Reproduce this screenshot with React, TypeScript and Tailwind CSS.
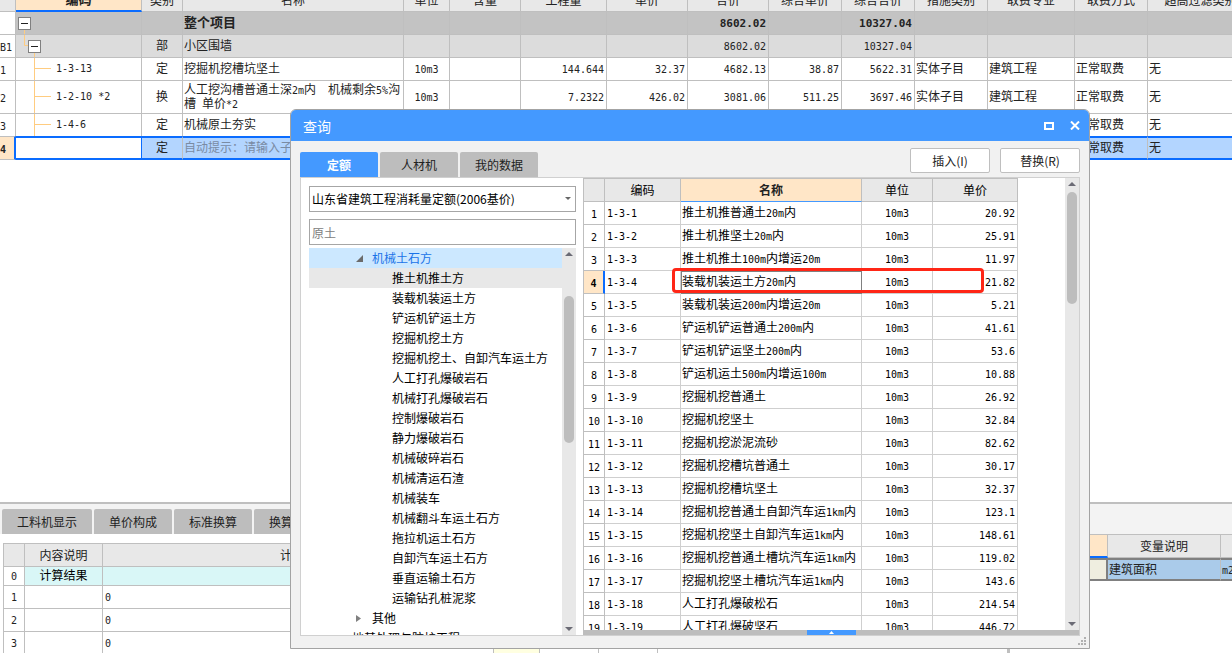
import { useState } from 'react';
import clsx from 'clsx';

const budgetColumns = [
  { title: '', width: 'w-4' },
  { title: '编码', width: 'w-[126px]' },
  { title: '类别', width: 'w-[41px]' },
  { title: '名称', width: 'w-[221px]' },
  { title: '单位', width: 'w-[46px]' },
  { title: '含量', width: 'w-[71px]' },
  { title: '工程量', width: 'w-[86px]' },
  { title: '单价', width: 'w-[81px]' },
  { title: '合价', width: 'w-[81px]' },
  { title: '综合单价', width: 'w-[73px]' },
  { title: '综合合价', width: 'w-[73px]' },
  { title: '措施类别', width: 'w-[73px]' },
  { title: '取费专业', width: 'w-[87px]' },
  { title: '取费方式', width: 'w-[73px]' },
  { title: '超高过滤类别', width: '' },
];

type BudgetRow = {
  no: string;
  code?: string;
  kind: string;
  name: string;
  unit?: string;
  qty?: string;
  price?: string;
  total?: string;
  unitCost?: string;
  totalCost?: string;
  measure?: string;
  major?: string;
  mode?: string;
  filter?: string;
  level: 'project' | 'section' | 'item' | 'new';
};

const budgetRows: BudgetRow[] = [
  { no: '', kind: '', name: '整个项目', total: '8602.02', totalCost: '10327.04', level: 'project' },
  { no: 'B1', kind: '部', name: '小区围墙', total: '8602.02', totalCost: '10327.04', level: 'section' },
  {
    no: '1', code: '1-3-13', kind: '定', name: '挖掘机挖槽坑坚土', unit: '10m3', qty: '144.644', price: '32.37',
    total: '4682.13', unitCost: '38.87', totalCost: '5622.31', measure: '实体子目', major: '建筑工程',
    mode: '正常取费', filter: '无', level: 'item',
  },
  {
    no: '2', code: '1-2-10 *2', kind: '换', name: '人工挖沟槽普通土深2m内\u3000机械剩余5%沟槽 单价*2', unit: '10m3',
    qty: '7.2322', price: '426.02', total: '3081.06', unitCost: '511.25', totalCost: '3697.46',
    measure: '实体子目', major: '建筑工程', mode: '正常取费', filter: '无', level: 'item',
  },
  { no: '3', code: '1-4-6', kind: '定', name: '机械原土夯实', mode: '正常取费', filter: '无', level: 'item' },
  { no: '4', kind: '定', name: '自动提示：请输入子目', mode: '正常取费', filter: '无', level: 'new' },
];

const quotas = [
  ['1-3-1', '推土机推普通土20m内', '20.92'],
  ['1-3-2', '推土机推坚土20m内', '25.91'],
  ['1-3-3', '推土机推土100m内增运20m', '11.97'],
  ['1-3-4', '装载机装运土方20m内', '21.82'],
  ['1-3-5', '装载机装运200m内增运20m', '5.21'],
  ['1-3-6', '铲运机铲运普通土200m内', '41.61'],
  ['1-3-7', '铲运机铲运坚土200m内', '53.6'],
  ['1-3-8', '铲运机运土500m内增运100m', '10.88'],
  ['1-3-9', '挖掘机挖普通土', '26.92'],
  ['1-3-10', '挖掘机挖坚土', '32.84'],
  ['1-3-11', '挖掘机挖淤泥流砂', '82.62'],
  ['1-3-12', '挖掘机挖槽坑普通土', '30.17'],
  ['1-3-13', '挖掘机挖槽坑坚土', '32.37'],
  ['1-3-14', '挖掘机挖普通土自卸汽车运1km内', '123.1'],
  ['1-3-15', '挖掘机挖坚土自卸汽车运1km内', '148.61'],
  ['1-3-16', '挖掘机挖普通土槽坑汽车运1km内', '119.02'],
  ['1-3-17', '挖掘机挖坚土槽坑汽车运1km内', '143.6'],
  ['1-3-18', '人工打孔爆破松石', '214.54'],
  ['1-3-19', '人工打孔爆破坚石', '446.72'],
];

const chapters = [
  '推土机推土方', '装载机装运土方', '铲运机铲运土方', '挖掘机挖土方', '挖掘机挖土、自卸汽车运土方',
  '人工打孔爆破岩石', '机械打孔爆破岩石', '控制爆破岩石', '静力爆破岩石', '机械破碎岩石', '机械清运石渣',
  '机械装车', '机械翻斗车运土石方', '拖拉机运土石方', '自卸汽车运土石方', '垂直运输土石方', '运输钻孔桩泥浆',
];

// Grid text: half-width characters take half the width of a Chinese character
function GridText({ text, large }: { text?: string; large?: boolean }) {
  if (!text) return null;
  return (
    <>
      {text.split(/([\x20-\x7e]+)/).map((part, i) =>
        i % 2 ? (
          <span
            key={i}
            className={clsx("leading-none font-['DejaVu_Sans_Mono',monospace]", large ? 'text-[11px]' : 'text-[10px]')}
          >
            {part}
          </span>
        ) : (
          part
        ),
      )}
    </>
  );
}

function Toggle() {
  return (
    <button aria-label="折叠" className="flex size-[13px] shrink-0 items-center justify-center border border-[#808080] bg-white">
      <span className="h-px w-[7px] bg-[#222]" />
    </button>
  );
}

function CodeCell({ row }: { row: BudgetRow }) {
  if (row.level === 'project') {
    return (
      <div className="flex h-[22px] items-center pl-0.5">
        <div className="relative">
          <Toggle />
          <span className="absolute top-[13px] left-1.5 h-1.5 w-px bg-[#ffcc80]" />
        </div>
      </div>
    );
  }
  if (row.level === 'section') {
    return (
      <div className="flex h-[22px] items-center pl-2">
        <svg width="4" height="22" className="shrink-0" stroke="#ffcc80">
          <path d="M.5 0V10.5H4" fill="none" />
        </svg>
        <div className="relative">
          <Toggle />
          <span className="absolute top-[13px] left-1.5 h-1.5 w-px bg-[#ffcc80]" />
        </div>
      </div>
    );
  }
  if (row.level === 'new') return null;
  return (
    <div className="flex items-center pl-[18px]">
      <svg width="22" height={row.no === '2' ? 32 : 22} className="shrink-0" stroke="#ffcc80">
        <path d={row.no === '2' ? 'M.5 0V32M0 15.5H17' : 'M.5 0V22M0 10.5H17'} fill="none" />
      </svg>
      <GridText text={row.code} />
    </div>
  );
}

function BudgetTable() {
  return (
    <table className="-mt-3 w-full min-w-[1254px] table-fixed border-separate border-spacing-0 text-[12px] leading-[14px] [&_td:nth-child(n+3)]:pb-0.5">
      <colgroup>
        {budgetColumns.map((c, i) => (
          <col key={i} className={c.width} />
        ))}
      </colgroup>
      <thead>
        <tr className="h-6">
          {budgetColumns.map((c, i) => (
            <th
              key={i}
              className={clsx(
                'border-r border-[#bfbfbf] p-0',
                i === 1 ? 'border-b-2 border-b-[#0a6cff] bg-[#ffe6c7] text-[13px] font-bold' : 'border-b bg-[#e8e8e8] font-normal',
              )}
            >
              {c.title}
            </th>
          ))}
        </tr>
      </thead>
      <tbody>
        {budgetRows.map((row, i) => {
          const active = row.level === 'new';
          const cell = clsx(
            'overflow-hidden border-r border-[#bfbfbf] p-0',
            active ? 'border-y-2 border-y-[#0a6cff]' : i !== 4 && 'border-b',
          );
          const num = clsx(cell, 'pr-0.5 text-right');
          return (
            <tr
              key={i}
              className={clsx(
                row.no === '2' ? 'h-[33px]' : active ? 'h-6' : i === 4 ? 'h-[22px]' : 'h-[23px]',
                row.level === 'project' && 'bg-[#c3c3c3] text-[13px] font-bold',
                row.level === 'section' && 'bg-[#dcdcdc]',
                active && 'bg-[#b3d5ff]',
              )}
            >
              <td
                className={clsx(
                  'overflow-hidden p-0 text-left',
                  active
                    ? 'border-t border-r-2 border-b border-[#bfbfbf] border-r-[#0a6cff] bg-[#ffe6c7] font-bold'
                    : 'border-r border-[#bfbfbf] bg-white',
                  !active && i !== 4 && 'border-b',
                )}
              >
                <GridText text={row.no} />
              </td>
              <td className={active ? 'border-y-2 border-r border-[#0a6cff] bg-white p-0' : cell}>
                <CodeCell row={row} />
              </td>
              <td className={clsx(cell, 'text-center')}>{row.kind}</td>
              <td className={clsx(cell, 'pl-px', active && 'whitespace-nowrap text-[#7a8ba3]')}>
                <GridText text={row.name} />
              </td>
              <td className={clsx(cell, 'text-center')}>
                <GridText text={row.unit} />
              </td>
              <td className={cell} />
              {[row.qty, row.price, row.total, row.unitCost, row.totalCost].map((v, j) => (
                <td key={j} className={num}>
                  <GridText text={v} large={row.level === 'project'} />
                </td>
              ))}
              {[row.measure, row.major, row.mode, row.filter].map((v, j) => (
                <td key={j} className={clsx(cell, 'pl-px')}>
                  {v}
                </td>
              ))}
            </tr>
          );
        })}
      </tbody>
    </table>
  );
}

function DetailPanel() {
  return (
    <section className="flex h-[151px] shrink-0 flex-col overflow-hidden border-t-2 border-[#bfbfbf]">
      <div className="flex shrink-0 gap-0.5 bg-[#f3f3f3] pt-[5px] pl-0.5 text-[12px]">
        {['工料机显示', '单价构成', '标准换算', '换算信息'].map((tab, i) => (
          <button key={tab} className={clsx('h-[25px] rounded-t-xs bg-[#bdbdbd]', i === 0 ? 'w-[90px]' : 'w-[78px]')}>
            {tab}
          </button>
        ))}
      </div>
      <div className="flex min-h-0 flex-1">
        <div className="w-[1010px] shrink-0 overflow-hidden border-r-2 border-[#bfbfbf] pt-[9px] pl-[3px]">
          <table className="w-full table-fixed border-separate border-spacing-0 border-t border-l border-[#bfbfbf] text-[12px] leading-[14px] [&_td]:pb-0.5">
            <colgroup>
              <col className="w-[21px]" />
              <col className="w-[78px]" />
              <col className="w-[391px]" />
              <col className="w-[46px]" />
              <col className="w-[59px]" />
              <col className="w-[59px]" />
              <col />
            </colgroup>
            <thead>
              <tr className="h-[23px] bg-[#e8e8e8]">
                {['', '内容说明', '计算式', '费率', '金额', '代号', '备注'].map((h) => (
                  <th key={h} className="border-r border-b border-[#bfbfbf] p-0 font-normal">
                    {h}
                  </th>
                ))}
              </tr>
            </thead>
            <tbody>
              {[0, 1, 2, 3, 4].map((n) => (
                <tr key={n} className={n === 0 ? 'h-[19px] bg-[#d9f7f7]' : 'h-[23px]'}>
                  <td className="border-r border-b border-[#bfbfbf] bg-white p-0 text-center">
                    <GridText text={String(n)} />
                  </td>
                  <td className="border-r border-b border-[#bfbfbf] p-0 text-center text-black">{n === 0 && '计算结果'}</td>
                  <td className="border-r border-b border-[#bfbfbf] p-0 pl-0.5">{n > 0 && <GridText text="0" />}</td>
                  <td className={clsx('border-r border-b border-[#bfbfbf] p-0', n > 0 && 'bg-[#ffffe1]')} />
                  <td className="border-r border-b border-[#bfbfbf] p-0" />
                  <td className="border-r border-b border-[#bfbfbf] p-0" />
                  <td className="border-r border-b border-[#bfbfbf] p-0" />
                </tr>
              ))}
            </tbody>
          </table>
        </div>
        <div className="min-w-0 flex-1 overflow-hidden">
          <table className="w-full min-w-[271px] table-fixed border-separate border-spacing-0 border-t border-[#bfbfbf] text-[12px] leading-[14px] [&_td]:pb-0.5">
            <colgroup>
              <col className="w-[98px]" />
              <col className="w-[113px]" />
              <col />
            </colgroup>
            <thead>
              <tr className="h-[23px] bg-[#e8e8e8]">
                <th className="border-r border-b-2 border-r-[#bfbfbf] border-b-[#0a6cff] bg-[#ffe6c7] p-0">变量名</th>
                <th className="border-r border-b border-[#bfbfbf] p-0 font-normal">变量说明</th>
                <th className="border-r border-b border-[#bfbfbf] p-0 font-normal">单位</th>
              </tr>
            </thead>
            <tbody>
              <tr className="h-[23px] bg-[#aacbea]">
                <td className="border-2 border-[#808080] bg-[#efeee0] p-0">JZMJ</td>
                <td className="border-y-2 border-r border-y-[#808080] border-r-[#bfbfbf] p-0 pl-px">建筑面积</td>
                <td className="border-y-2 border-[#808080] p-0 pl-px">
                  <GridText text="m2" />
                </td>
              </tr>
            </tbody>
          </table>
        </div>
      </div>
    </section>
  );
}

function ScrollBar({ thumb }: { thumb: string }) {
  return (
    <div className="flex w-3.5 shrink-0 flex-col items-center bg-[#e8e8e8] py-1">
      <svg width="8" height="4" className="shrink-0" fill="#6b6b75">
        <path d="M0 4 4 0l4 4z" />
      </svg>
      <div className="min-h-0 w-2.5 flex-1">
        <div className={clsx('rounded-full bg-[#bdbdbd]', thumb)} />
      </div>
      <svg width="8" height="4" className="shrink-0" fill="#6b6b75">
        <path d="M0 0h8L4 4z" />
      </svg>
    </div>
  );
}

function ChapterTree() {
  return (
    <div className="mt-[3px] flex min-h-0 flex-1 text-[12px] leading-5 text-black">
      <ul className="h-full min-w-0 flex-1 overflow-hidden">
        <li>
          <button className="flex h-5 w-full items-center bg-[#cce8ff] pl-[47px] text-[#1a73e8]">
            <svg width="7" height="7" className="mr-[9px]" fill="#6b6b6b">
              <path d="M7 0v7H0z" />
            </svg>
            机械土石方
          </button>
          <ul>
            {chapters.map((c, i) => (
              <li key={c}>
                <button className={clsx('block h-5 w-full pl-[83px] text-left whitespace-nowrap', i === 0 && 'bg-[#e8e8e8]')}>{c}</button>
              </li>
            ))}
          </ul>
        </li>
        <li>
          <button className="flex h-5 w-full items-center pl-[47px]">
            <svg width="5" height="7" className="mr-[11px]" fill="#808080">
              <path d="M0 0l5 3.5L0 7z" />
            </svg>
            其他
          </button>
        </li>
        <li>
          <button className="block h-5 w-full pl-[43px] text-left">地基处理与防护工程</button>
        </li>
      </ul>
      <ScrollBar thumb="mt-10 h-[147px]" />
    </div>
  );
}

function QuotaTable() {
  const [selected, setSelected] = useState(3);
  return (
    <table className="w-[435px] table-fixed border-separate border-spacing-0 border-t border-l border-[#bfbfbf] text-[12px] leading-[14px] text-black [&_td:nth-child(n+2)]:pb-0.5">
      <colgroup>
        <col className="w-[21px]" />
        <col className="w-[76px]" />
        <col className="w-[181px]" />
        <col className="w-[71px]" />
        <col className="w-[85px]" />
      </colgroup>
      <thead>
        <tr className="h-[23px] bg-[#e8e8e8]">
          {['', '编码', '名称', '单位', '单价'].map((h) => (
            <th
              key={h}
              className={clsx(
                'border-r border-b border-r-[#bfbfbf] p-0',
                h === '名称' ? 'border-b-[#4499ff] bg-[#ffe6c7] font-bold text-[#222]' : 'border-b-[#bfbfbf] font-normal',
              )}
            >
              {h}
            </th>
          ))}
        </tr>
      </thead>
      <tbody>
        {quotas.map(([code, name, price], i) => {
          const active = i === selected;
          return (
            <tr key={code} className="h-[23px]" onClick={() => setSelected(i)}>
              <td
                className={clsx(
                  'border-b border-[#bfbfbf] p-0 text-center',
                  active ? 'border-r-2 border-r-[#0a6cff] bg-[#ffe6c7] font-bold' : 'border-r',
                )}
              >
                <GridText text={String(i + 1)} />
              </td>
              <td className="border-r border-b border-[#cfcfcf] p-0 pl-0.5">
                <GridText text={code} />
              </td>
              <td
                className={clsx(
                  'overflow-hidden p-0 whitespace-nowrap',
                  active ? 'border border-b-2 border-[#808080]' : 'border-r border-b border-[#cfcfcf] pl-px',
                )}
              >
                <GridText text={name} />
              </td>
              <td className="border-r border-b border-[#cfcfcf] p-0 text-center">
                <GridText text="10m3" />
              </td>
              <td className="border-r border-b border-[#cfcfcf] p-0 pr-0.5 text-right">
                <GridText text={price} />
              </td>
            </tr>
          );
        })}
      </tbody>
    </table>
  );
}

function QueryDialog() {
  const [tab, setTab] = useState('定额');
  const [keyword, setKeyword] = useState('原土');

  return (
    <div
      role="dialog"
      aria-label="查询"
      className="absolute top-[109px] left-[290px] flex h-[540px] w-[800px] flex-col overflow-hidden rounded-t-md border border-[#a3a3a3] bg-[#f1f1f1]"
    >
      <div className="flex h-[31px] shrink-0 items-center bg-[#4499ff] pr-[9px] pl-3 text-white">
        <h2 className="flex-1 text-[14px] leading-5">查询</h2>
        <button aria-label="最大化" className="mr-4">
          <svg width="10" height="8" fill="none" stroke="currentColor" strokeWidth="2">
            <path d="M1 1h8v6H1z" />
          </svg>
        </button>
        <button aria-label="关闭">
          <svg width="10" height="9" fill="none" stroke="currentColor" strokeWidth="2">
            <path d="M1 .5l8 8M9 .5l-8 8" />
          </svg>
        </button>
      </div>

      <div className="flex h-9 shrink-0 items-end justify-between px-[9px] text-[12px]">
        <div className="flex gap-0.5">
          {['定额', '人材机', '我的数据'].map((t) => (
            <button
              key={t}
              onClick={() => setTab(t)}
              className={clsx('h-[25px] w-[78px] rounded-t-xs', t === tab ? 'bg-[#4499ff] font-bold text-white' : 'bg-[#bdbdbd]')}
            >
              {t}
            </button>
          ))}
        </div>
        <div className="mb-1 flex gap-2.5">
          <button className="h-[25px] w-20 rounded-xs border border-[#bfbfbf] bg-white">插入(I)</button>
          <button className="h-[25px] w-20 rounded-xs border border-[#bfbfbf] bg-white">替换(R)</button>
        </div>
      </div>

      <div className="mx-[9px] mb-3 flex min-h-0 flex-1 border border-[#d0d0d0] bg-white">
        <div className="flex w-[282px] shrink-0 flex-col pt-2 pr-[7px] pl-2 text-[12px]">
          <div className="relative">
            <select
              aria-label="定额库"
              className="block h-[26px] w-full appearance-none border border-[#a6a6a6] bg-white pl-0.5 text-black"
            >
              <option>山东省建筑工程消耗量定额(2006基价)</option>
            </select>
            <svg width="6" height="3" className="pointer-events-none absolute top-[11px] right-[5px]" fill="#666">
              <path d="M0 0h6L3 3z" />
            </svg>
          </div>
          <input
            type="text"
            aria-label="关键字"
            value={keyword}
            onChange={(e) => setKeyword(e.target.value)}
            className="mt-[7px] h-[26px] w-full border border-[#a6a6a6] bg-white pl-0.5 text-[#808080]"
          />
          <ChapterTree />
        </div>

        <div className="flex min-w-0 flex-1 flex-col">
          <div className="flex min-h-0 flex-1">
            <div className="relative min-w-0 flex-1 overflow-hidden">
              <QuotaTable />
              <div className="pointer-events-none absolute top-[90px] left-[89px] h-[25px] w-[312px] rounded-[4px] border-3 border-[#ff2616]" />
            </div>
            <ScrollBar thumb="mt-1.5 h-28" />
          </div>
          <div className="flex h-[5px] shrink-0 justify-center bg-[#bdbdbd]">
            <button aria-label="展开" className="flex w-[49px] items-center justify-center bg-[#4499ff]">
              <svg width="5" height="3" fill="#fff">
                <path d="M0 3 2.5 0 5 3z" />
              </svg>
            </button>
          </div>
        </div>
      </div>

      <svg width="8" height="8" className="absolute right-[3px] bottom-[3px]" fill="#b0b0b0">
        <path d="M6 0h2v2H6zM3 3h2v2H3zM6 3h2v2H6zM0 6h2v2H0zM3 6h2v2H3zM6 6h2v2H6z" />
      </svg>
    </div>
  );
}

export default function App() {
  return (
    <main className="relative flex h-screen flex-col overflow-hidden bg-white font-['Noto_Sans_CJK_SC',sans-serif] text-[#222]">
      <div className="min-h-0 flex-1 overflow-hidden">
        <BudgetTable />
      </div>
      <DetailPanel />
      <QueryDialog />
    </main>
  );
}
